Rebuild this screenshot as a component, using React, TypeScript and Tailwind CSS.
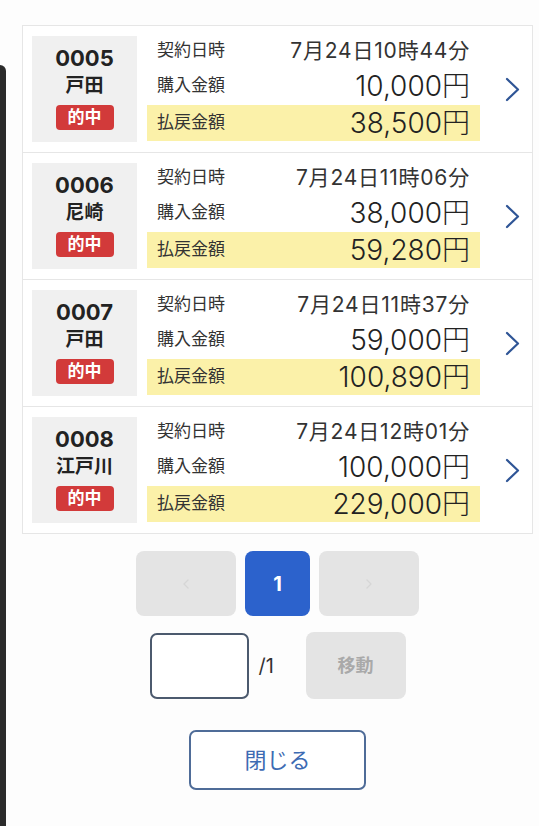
import { ChevronLeft, ChevronRight } from 'lucide-react';

type Bet = {
  no: string;
  place: string;
  date: string;
  purchase: string;
  payout: string;
};

const bets: Bet[] = [
  { no: '0005', place: '戸田', date: '7月24日10時44分', purchase: '10,000円', payout: '38,500円' },
  { no: '0006', place: '尼崎', date: '7月24日11時06分', purchase: '38,000円', payout: '59,280円' },
  { no: '0007', place: '戸田', date: '7月24日11時37分', purchase: '59,000円', payout: '100,890円' },
  { no: '0008', place: '江戸川', date: '7月24日12時01分', purchase: '100,000円', payout: '229,000円' },
];

const RowArrow = () => (
  <svg className="ml-[25px] w-[15px] h-[25px]" viewBox="0 0 15 25" fill="none">
    <polyline points="2,2 13,12.5 2,23" stroke="#2f5596" strokeWidth={2.2} strokeLinecap="round" strokeLinejoin="round" />
  </svg>
);

const BetRow = ({ bet }: { bet: Bet }) => (
  <div className="flex items-center py-[10px] pl-[9px] border-b border-[#e6e6e6] last:border-b-0">
    <div className="w-[105px] h-[106px] bg-[#f0f0f0] flex flex-col items-center pt-[8px]">
      <div className="text-[22px] leading-[28px] font-bold text-[#222]">{bet.no}</div>
      <div className="text-[19px] leading-[27px] font-bold text-[#222]">{bet.place}</div>
      <div className="mt-[6px] w-[58px] h-[25px] rounded-[4px] bg-[#d23a3a] text-white text-[17px] leading-[25px] font-bold text-center">
        的中
      </div>
    </div>

    <div className="ml-[10px] w-[333px] h-[106px] flex flex-col">
      <div className="h-[30px] flex items-center justify-between pl-[10px] pr-[10px]">
        <span className="text-[17px] text-[#333]">契約日時</span>
        <span className="text-[21px] tracking-[0.8px] text-[#333]">{bet.date}</span>
      </div>
      <div className="h-[39px] flex items-center justify-between pl-[10px] pr-[10px]">
        <span className="text-[17px] text-[#333]">購入金額</span>
        <span className="text-[28px] text-[#222] font-light">{bet.purchase}</span>
      </div>
      <div className="h-[36px] flex items-center justify-between pl-[10px] pr-[10px] bg-[#fbf1a9]">
        <span className="text-[17px] text-[#333]">払戻金額</span>
        <span className="text-[28px] text-[#222] font-light">{bet.payout}</span>
      </div>
    </div>

    <RowArrow />
  </div>
);

export default function App() {
  return (
    <div
      className="flex min-h-[826px] bg-[#fdfdfd]"
      style={{ fontFamily: 'Inter, "Noto Sans CJK JP", sans-serif' }}
    >
      <div className="w-[6px] mt-[65px] bg-[#2b2b2b] rounded-tr-[6px] shrink-0" />

      <div className="ml-[16px] w-[511px] flex flex-col items-center">
        <div className="w-full mt-[25px] border border-[#e6e6e6] bg-white">
          {bets.map((b) => (
            <BetRow key={b.no} bet={b} />
          ))}
        </div>

        <div className="mt-[17px] flex gap-[9px]">
          <button className="w-[100px] h-[65px] rounded-[8px] bg-[#e4e4e4] flex items-center justify-center">
            <ChevronLeft className="w-[16px] h-[16px] text-[#d6d6d6]" strokeWidth={2} />
          </button>
          <button className="w-[65px] h-[65px] rounded-[8px] bg-[#2c62cc] text-white text-[20px] font-bold">
            1
          </button>
          <button className="w-[100px] h-[65px] rounded-[8px] bg-[#e4e4e4] flex items-center justify-center">
            <ChevronRight className="w-[16px] h-[16px] text-[#d6d6d6]" strokeWidth={2} />
          </button>
        </div>

        <div className="mt-[16px] flex items-center">
          <input className="w-[99px] h-[66px] rounded-[7px] border-2 border-[#4c5a6e] bg-white" />
          <span className="w-[57px] pl-[10px] text-[20px] text-[#333]">/1</span>
          <button className="w-[100px] h-[67px] rounded-[8px] bg-[#e4e4e4] text-[#a9a9a9] text-[18px] font-bold">
            移動
          </button>
        </div>

        <button className="mt-[31px] w-[177px] h-[60px] rounded-[7px] border-2 border-[#4f6c98] bg-white text-[#3d6bb3] text-[22px]">
          閉じる
        </button>
      </div>
    </div>
  );
}
